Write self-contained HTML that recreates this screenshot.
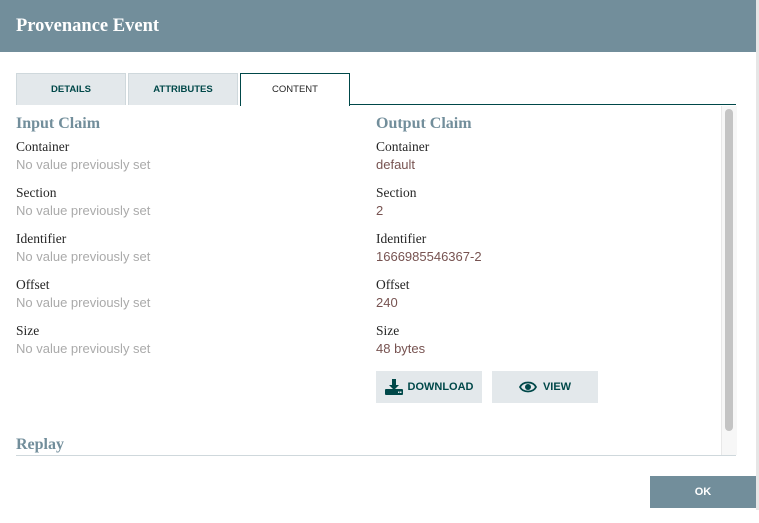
<!DOCTYPE html>
<html><head><style>
body{margin:0;width:759px;height:523px;background:#fff;position:relative;overflow:hidden;font-family:"Liberation Sans",sans-serif}
.shadow{position:absolute;left:756px;top:0;width:3px;height:510px;background:#e6e6e6}
.hdr{position:absolute;left:0;top:0;width:756px;height:52px;background:#728e9b;color:#fff;font-family:"Liberation Serif",serif;font-weight:bold;font-size:18.5px;line-height:52px;padding-left:16px;box-sizing:border-box}
.tab{position:absolute;top:73px;height:32px;box-sizing:border-box;background:#e3e8eb;border:1px solid #cfd8dc;border-bottom:none;font-size:9.5px;font-weight:bold;color:#004849;text-align:center;line-height:32px}
.tab.act{background:#fff;border:1px solid #004849;border-bottom:none;color:#262626;font-weight:normal;height:33px}
.line{position:absolute;left:349px;top:104px;width:387px;height:1px;background:#004849}
.sb{position:absolute;left:721px;top:106px;width:15px;height:349px;background:#f7f7f7;border-left:1px solid #e8e8e8}
.th{position:absolute;left:725px;top:109px;width:8px;height:322px;background:#c4c4c4;border-radius:4px}
.bot{position:absolute;left:16px;top:455px;width:720px;height:1px;background:#cfd8dc}
h3{position:absolute;margin:0;font-family:"Liberation Serif",serif;font-weight:bold;font-size:16px;color:#728e9b}
.l{position:absolute;font-family:"Liberation Serif",serif;font-size:13.5px;color:#262626}
.v{position:absolute;font-size:13px;color:#aaa}
.v.o{color:#775351}
.btn{position:absolute;top:371px;height:32px;background:#e3e8eb;color:#004849;font-size:11px;font-weight:bold;display:flex;align-items:center;justify-content:center;gap:5px}
.ok{position:absolute;left:650px;top:476px;width:106px;height:32px;background:#728e9b;color:#fff;font-size:11px;font-weight:bold;text-align:center;line-height:32px}
</style></head><body>
<div class="shadow"></div>
<div class="hdr">Provenance Event</div>
<div class="tab" style="left:16px;width:110px">DETAILS</div>
<div class="tab" style="left:128px;width:110px">ATTRIBUTES</div>
<div class="tab act" style="left:240px;width:110px">CONTENT</div>
<div class="line"></div>
<div class="sb"></div><div class="th"></div>
<h3 style="left:16px;top:115px">Input Claim</h3>
<h3 style="left:376px;top:115px">Output Claim</h3>
<div class="l" style="left:16px;top:139px">Container</div><div class="v" style="left:16px;top:157px">No value previously set</div>
<div class="l" style="left:16px;top:185px">Section</div><div class="v" style="left:16px;top:203px">No value previously set</div>
<div class="l" style="left:16px;top:231px">Identifier</div><div class="v" style="left:16px;top:249px">No value previously set</div>
<div class="l" style="left:16px;top:277px">Offset</div><div class="v" style="left:16px;top:295px">No value previously set</div>
<div class="l" style="left:16px;top:323px">Size</div><div class="v" style="left:16px;top:341px">No value previously set</div>
<div class="l" style="left:376px;top:139px">Container</div><div class="v o" style="left:376px;top:157px">default</div>
<div class="l" style="left:376px;top:185px">Section</div><div class="v o" style="left:376px;top:203px">2</div>
<div class="l" style="left:376px;top:231px">Identifier</div><div class="v o" style="left:376px;top:249px">1666985546367-2</div>
<div class="l" style="left:376px;top:277px">Offset</div><div class="v o" style="left:376px;top:295px">240</div>
<div class="l" style="left:376px;top:323px">Size</div><div class="v o" style="left:376px;top:341px">48 bytes</div>
<div class="btn" style="left:376px;width:106px"><svg width="18" height="16" viewBox="0 0 18 16"><path d="M7 0h4v6h3l-5 5-5-5h3z" fill="#004849"/><rect x="0" y="10" width="18" height="6" rx="1" fill="#004849"/><rect x="13" y="12.5" width="1.5" height="1.5" fill="#e3e8eb"/><rect x="15" y="12.5" width="1.5" height="1.5" fill="#e3e8eb"/></svg>DOWNLOAD</div>
<div class="btn" style="left:492px;width:106px;gap:6px"><svg width="18" height="12" viewBox="0 0 18 12"><path d="M1 6C4 0 14 0 17 6C14 12 4 12 1 6Z" fill="none" stroke="#004849" stroke-width="1.8"/><circle cx="9" cy="6" r="3" fill="#004849"/></svg>VIEW</div>
<h3 style="left:16px;top:436px">Replay</h3>
<div class="bot"></div>
<div class="ok">OK</div>
</body></html>
